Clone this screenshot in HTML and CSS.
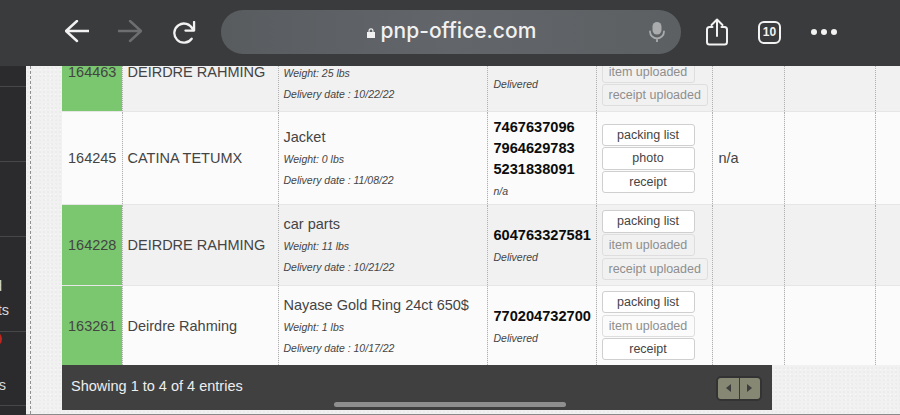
FILE: index.html
```html
<!DOCTYPE html>
<html lang="en">
<head>
    <meta charset="UTF-8">
    <meta name="viewport" content="width=device-width, initial-scale=1.0">
    <title>pnp-office.com</title>
    <link rel="stylesheet" href="styles.css">
</head>
<body>
    <div class="toolbar">
        <svg class="icon icon-nav" viewBox="0 0 24 24"><path d="M24 11H1M12 1L1 11l11 10"/></svg>
        <svg class="icon icon-nav icon-off" viewBox="0 0 24 24"><path d="M0 11h23M12 1l11 10-11 10"/></svg>
        <svg class="icon icon-reload" viewBox="0 0 24 24"><path d="M19.5 18.5A10 10 0 1 1 20.5 8.5M22 1v9h-9"/></svg>
        <div class="url-bar">
            <span class="url-text">
                <svg class="lock" viewBox="0 0 8 10"><path d="M1.5 4V2.8a2.5 2.5 0 0 1 5 0V4H8v6H0V4zM2.6 4h2.8V2.8a1.4 1.4 0 0 0-2.8 0z"/></svg>
                pnp-office.com
            </span>
            <svg class="mic" viewBox="0 0 16 20"><rect x="3.5" y="0" width="9" height="12.5" rx="4.5"/><path class="mic-arm" d="M1 9.5a7 7 0 0 0 14 0M8 16.5V20"/></svg>
        </div>
        <svg class="icon icon-share" viewBox="0 0 24 28"><path d="M7.5 9H4.5a2.5 2.5 0 0 0-2.500 2.500V24a2.500 2.500 0 0 0 2.500 2.500h15a2.500 2.500 0 0 0 2.500-2.500V11.500A2.500 2.500 0 0 0 19.500 9H16.500M12 18V2M6.500 7L12 1.500 17.500 7"/></svg>
        <div class="tab-count">10</div>
        <div class="dots"><i></i><i></i><i></i></div>
    </div>

    <div class="page">
        <div class="sidebar">
            <div class="side-item side-a"></div>
            <div class="side-item side-b"></div>
            <div class="side-item side-c"><span class="side-text side-text-c"><span class="side-line">d</span>ts</span></div>
            <div class="side-item side-d"><span class="badge"></span><span class="side-text">s</span></div>
        </div>

        <div class="content">
            <table class="orders">
                <colgroup>
                    <col class="col-id"><col class="col-name"><col class="col-item"><col class="col-track">
                    <col class="col-docs"><col class="col-note"><col class="col-blank"><col class="col-rest">
                </colgroup>
                <tr class="row-even">
                    <td class="cell-id done">164463</td>
                    <td>DEIRDRE RAHMING</td>
                    <td><div class="item-name">&nbsp;</div><div class="meta">Weight: 25 lbs</div><div class="meta">Delivery date : 10/22/22</div></td>
                    <td><div class="track">&nbsp;</div><div class="meta">Delivered</div></td>
                    <td><div class="docs"><span class="btn">packing list</span><span class="btn btn-done">item uploaded</span><span class="btn btn-done">receipt uploaded</span></div></td>
                    <td></td><td></td><td></td>
                </tr>
                <tr class="row-odd">
                    <td class="cell-id">164245</td>
                    <td>CATINA TETUMX</td>
                    <td><div class="item-name">Jacket</div><div class="meta">Weight: 0 lbs</div><div class="meta">Delivery date : 11/08/22</div></td>
                    <td><div class="track">7467637096</div><div class="track">7964629783</div><div class="track">5231838091</div><div class="meta">n/a</div></td>
                    <td><div class="docs"><span class="btn">packing list</span><span class="btn">photo</span><span class="btn">receipt</span></div></td>
                    <td class="cell-note">n/a</td><td></td><td></td>
                </tr>
                <tr class="row-even">
                    <td class="cell-id done">164228</td>
                    <td>DEIRDRE RAHMING</td>
                    <td><div class="item-name">car parts</div><div class="meta">Weight: 11 lbs</div><div class="meta">Delivery date : 10/21/22</div></td>
                    <td><div class="track">604763327581</div><div class="meta">Delivered</div></td>
                    <td><div class="docs"><span class="btn">packing list</span><span class="btn btn-done">item uploaded</span><span class="btn btn-done">receipt uploaded</span></div></td>
                    <td></td><td></td><td></td>
                </tr>
                <tr class="row-odd">
                    <td class="cell-id done">163261</td>
                    <td>Deirdre Rahming</td>
                    <td><div class="item-name">Nayase Gold Ring 24ct 650$</div><div class="meta">Weight: 1 lbs</div><div class="meta">Delivery date : 10/17/22</div></td>
                    <td><div class="track">770204732700</div><div class="meta">Delivered</div></td>
                    <td><div class="docs"><span class="btn">packing list</span><span class="btn btn-done">item uploaded</span><span class="btn">receipt</span></div></td>
                    <td></td><td></td><td></td>
                </tr>
            </table>

            <div class="table-footer">
                <span>Showing 1 to 4 of 4 entries</span>
                <div class="pager">
                    <span class="pager-btn"><i class="arrow-left"></i></span>
                    <span class="pager-btn"><i class="arrow-right"></i></span>
                </div>
                <div class="home-bar"></div>
            </div>
        </div>
    </div>
</body>
</html>
```

FILE: styles.css
```css
html, body {
    margin: 0;
    height: 415px;
    overflow: hidden;
}
body {
    font-family: "Liberation Sans", Arial, sans-serif;
    background-color: #2b2b2e;
    color: #444;
}

/* browser chrome */
.toolbar {
    height: 66px;
    background: #3a3b3d;
    display: flex;
    align-items: center;
    padding: 0 0 2px 65px;
    box-sizing: border-box;
}
.icon {
    fill: none;
    stroke: #f2f2f2;
    stroke-width: 2.4;
    stroke-linecap: round;
    stroke-linejoin: round;
    flex: none;
}
.icon-nav {
    width: 24px;
    height: 24px;
    margin-right: 29px;
}
.icon-nav + .icon-nav {
    margin-right: 31px;
}
.icon-off {
    stroke: #6d6e70;
}
.icon-reload {
    width: 23px;
    height: 23px;
}
.url-bar {
    width: 460px;
    height: 44px;
    margin-left: 25px;
    border-radius: 22px;
    background: linear-gradient(90deg, #595c5f, #62656a 50%, #5c6062);
    display: flex;
    align-items: center;
    justify-content: flex-end;
    position: relative;
}
.url-text {
    position: absolute;
    left: 146px;
    top: 7px;
    font-family: Inter, "Liberation Sans", sans-serif;
    font-size: 21px;
    font-weight: 500;
    line-height: 28px;
    color: #f1f1f1;
    white-space: nowrap;
}
.lock {
    width: 8px;
    height: 10px;
    fill: #f1f1f1;
}
.mic {
    width: 16px;
    height: 20px;
    margin-right: 16px;
    fill: #a9abad;
}
.mic-arm {
    fill: none;
    stroke: #a9abad;
    stroke-width: 1.8;
    stroke-linecap: round;
}
.icon-share {
    width: 24px;
    height: 28px;
    margin-left: 24px;
    stroke-width: 2;
}
.tab-count {
    width: 23px;
    height: 23px;
    margin-left: 29px;
    box-sizing: border-box;
    border: 2px solid #f2f2f2;
    border-radius: 6px;
    color: #f2f2f2;
    font-size: 12px;
    font-weight: bold;
    line-height: 19px;
    text-align: center;
    flex: none;
}
.dots {
    display: flex;
    gap: 4px;
    margin-left: 30px;
}
.dots i {
    width: 6px;
    height: 6px;
    border-radius: 50%;
    background: #f2f2f2;
}

/* page */
.page {
    display: flex;
    height: 349px;
    overflow: hidden;
}
.sidebar {
    width: 26px;
    flex: none;
    background: #2b2b2e;
    padding-top: 20px;
    color: #d8d8d8;
    font-size: 14.500px;
    overflow: hidden;
}
.side-item {
    box-sizing: border-box;
    border-top: 1px solid #47474a;
    position: relative;
}
.side-a, .side-b {
    height: 75px;
}
.side-c {
    height: 95px;
}
.side-d {
    height: 75px;
    border-bottom: 1px solid #47474a;
}
.side-text {
    position: absolute;
    right: 20px;
    top: 41px;
    line-height: 24px;
    text-align: right;
    color: #d8d8d8;
}
.side-text-c {
    right: 17px;
    top: 37px;
}
.side-line {
    display: block;
    margin-right: 7px;
}
.badge {
    position: absolute;
    right: 24px;
    top: -1px;
    width: 18px;
    height: 16px;
    border-radius: 8px;
    background: #c0281f;
}
.content {
    flex: 1;
    min-width: 0;
    overflow: hidden;
    height: 348px;
    border-bottom: 1px solid #8a8a8a;
    padding-left: 36px;
    position: relative;
    background-color: #f1f1f1;
    background-image:
        radial-gradient(#e6e6e6 0.6px, transparent 0.8px),
        radial-gradient(#fafafa 0.6px, transparent 0.8px);
    background-size: 4px 4px, 5px 5px;
    background-position: 0 0, 2px 1px;
}
.content::before {
    content: "";
    position: absolute;
    left: 4px;
    top: 0;
    bottom: 0;
    border-left: 1px dashed #8f8f8f;
}

/* table */
.orders {
    table-layout: fixed;
    border-collapse: collapse;
    width: 900px;
    margin-top: -35px;
    font-size: 14.500px;
}
.col-id { width: 60px; }
.col-name { width: 156px; }
.col-item { width: 209px; }
.col-track { width: 109px; }
.col-docs { width: 116px; }
.col-note { width: 72px; }
.col-blank { width: 91px; }
.orders td {
    padding: 5px;
    border-left: 1px dotted #b0b0b0;
    vertical-align: middle;
    white-space: nowrap;
    overflow: hidden;
}
.orders td:first-child {
    padding-left: 6px;
    border-left: 0;
}
.orders .cell-note {
    padding-left: 6px;
}
.row-even {
    background: #f1f1f1;
    border-top: 1px solid #e6e6e6;
}
.row-odd {
    background: #fbfbfb;
    border-top: 1px solid #e6e6e6;
}
.done {
    background: #7ac76f;
}
.item-name {
    line-height: 24px;
}
.meta {
    font-size: 10.500px;
    font-style: italic;
    line-height: 21px;
}
.track {
    font-weight: bold;
    font-size: 14.600px;
    line-height: 21px;
    color: #0c0c0c;
    margin-left: 1px;
}
.track + .meta {
    margin-left: 1px;
    line-height: 22px;
    margin-bottom: -3px;
}
.docs {
    display: flex;
    flex-direction: column;
    align-items: flex-start;
    gap: 1.300px;
}
.btn {
    box-sizing: border-box;
    min-width: 93px;
    height: 22.300px;
    padding: 0 6px;
    border: 1px solid #cfcfcf;
    border-radius: 3px;
    background: #fff;
    font-size: 12.500px;
    line-height: 20px;
    text-align: center;
}
.btn-done {
    color: #8e8e8e;
    background: transparent;
    border-color: #dedede;
}

/* footer */
.table-footer {
    width: 710px;
    height: 45px;
    background: #404040;
    color: #eee;
    font-size: 14.500px;
    display: flex;
    align-items: center;
    justify-content: space-between;
    box-sizing: border-box;
    padding: 0 10px 3px 9px;
    position: relative;
}
.pager {
    display: flex;
    width: 46px;
    height: 25px;
    box-sizing: border-box;
    border: 2px solid #333;
    border-radius: 5px;
    overflow: hidden;
    margin-top: 4px;
}
.pager-btn {
    flex: 1;
    background: #878873;
    display: flex;
    align-items: center;
    justify-content: center;
}
.pager-btn + .pager-btn {
    border-left: 1px solid #3a3a3a;
}
.arrow-left, .arrow-right {
    border: 4px solid transparent;
}
.arrow-left {
    border-right: 5px solid #3d3d3d;
    border-left: 0;
}
.arrow-right {
    border-left: 5px solid #3d3d3d;
    border-right: 0;
}
.home-bar {
    position: absolute;
    left: 272px;
    bottom: 3px;
    width: 232px;
    height: 5px;
    border-radius: 3px;
    background: #8f8f8f;
}
```
